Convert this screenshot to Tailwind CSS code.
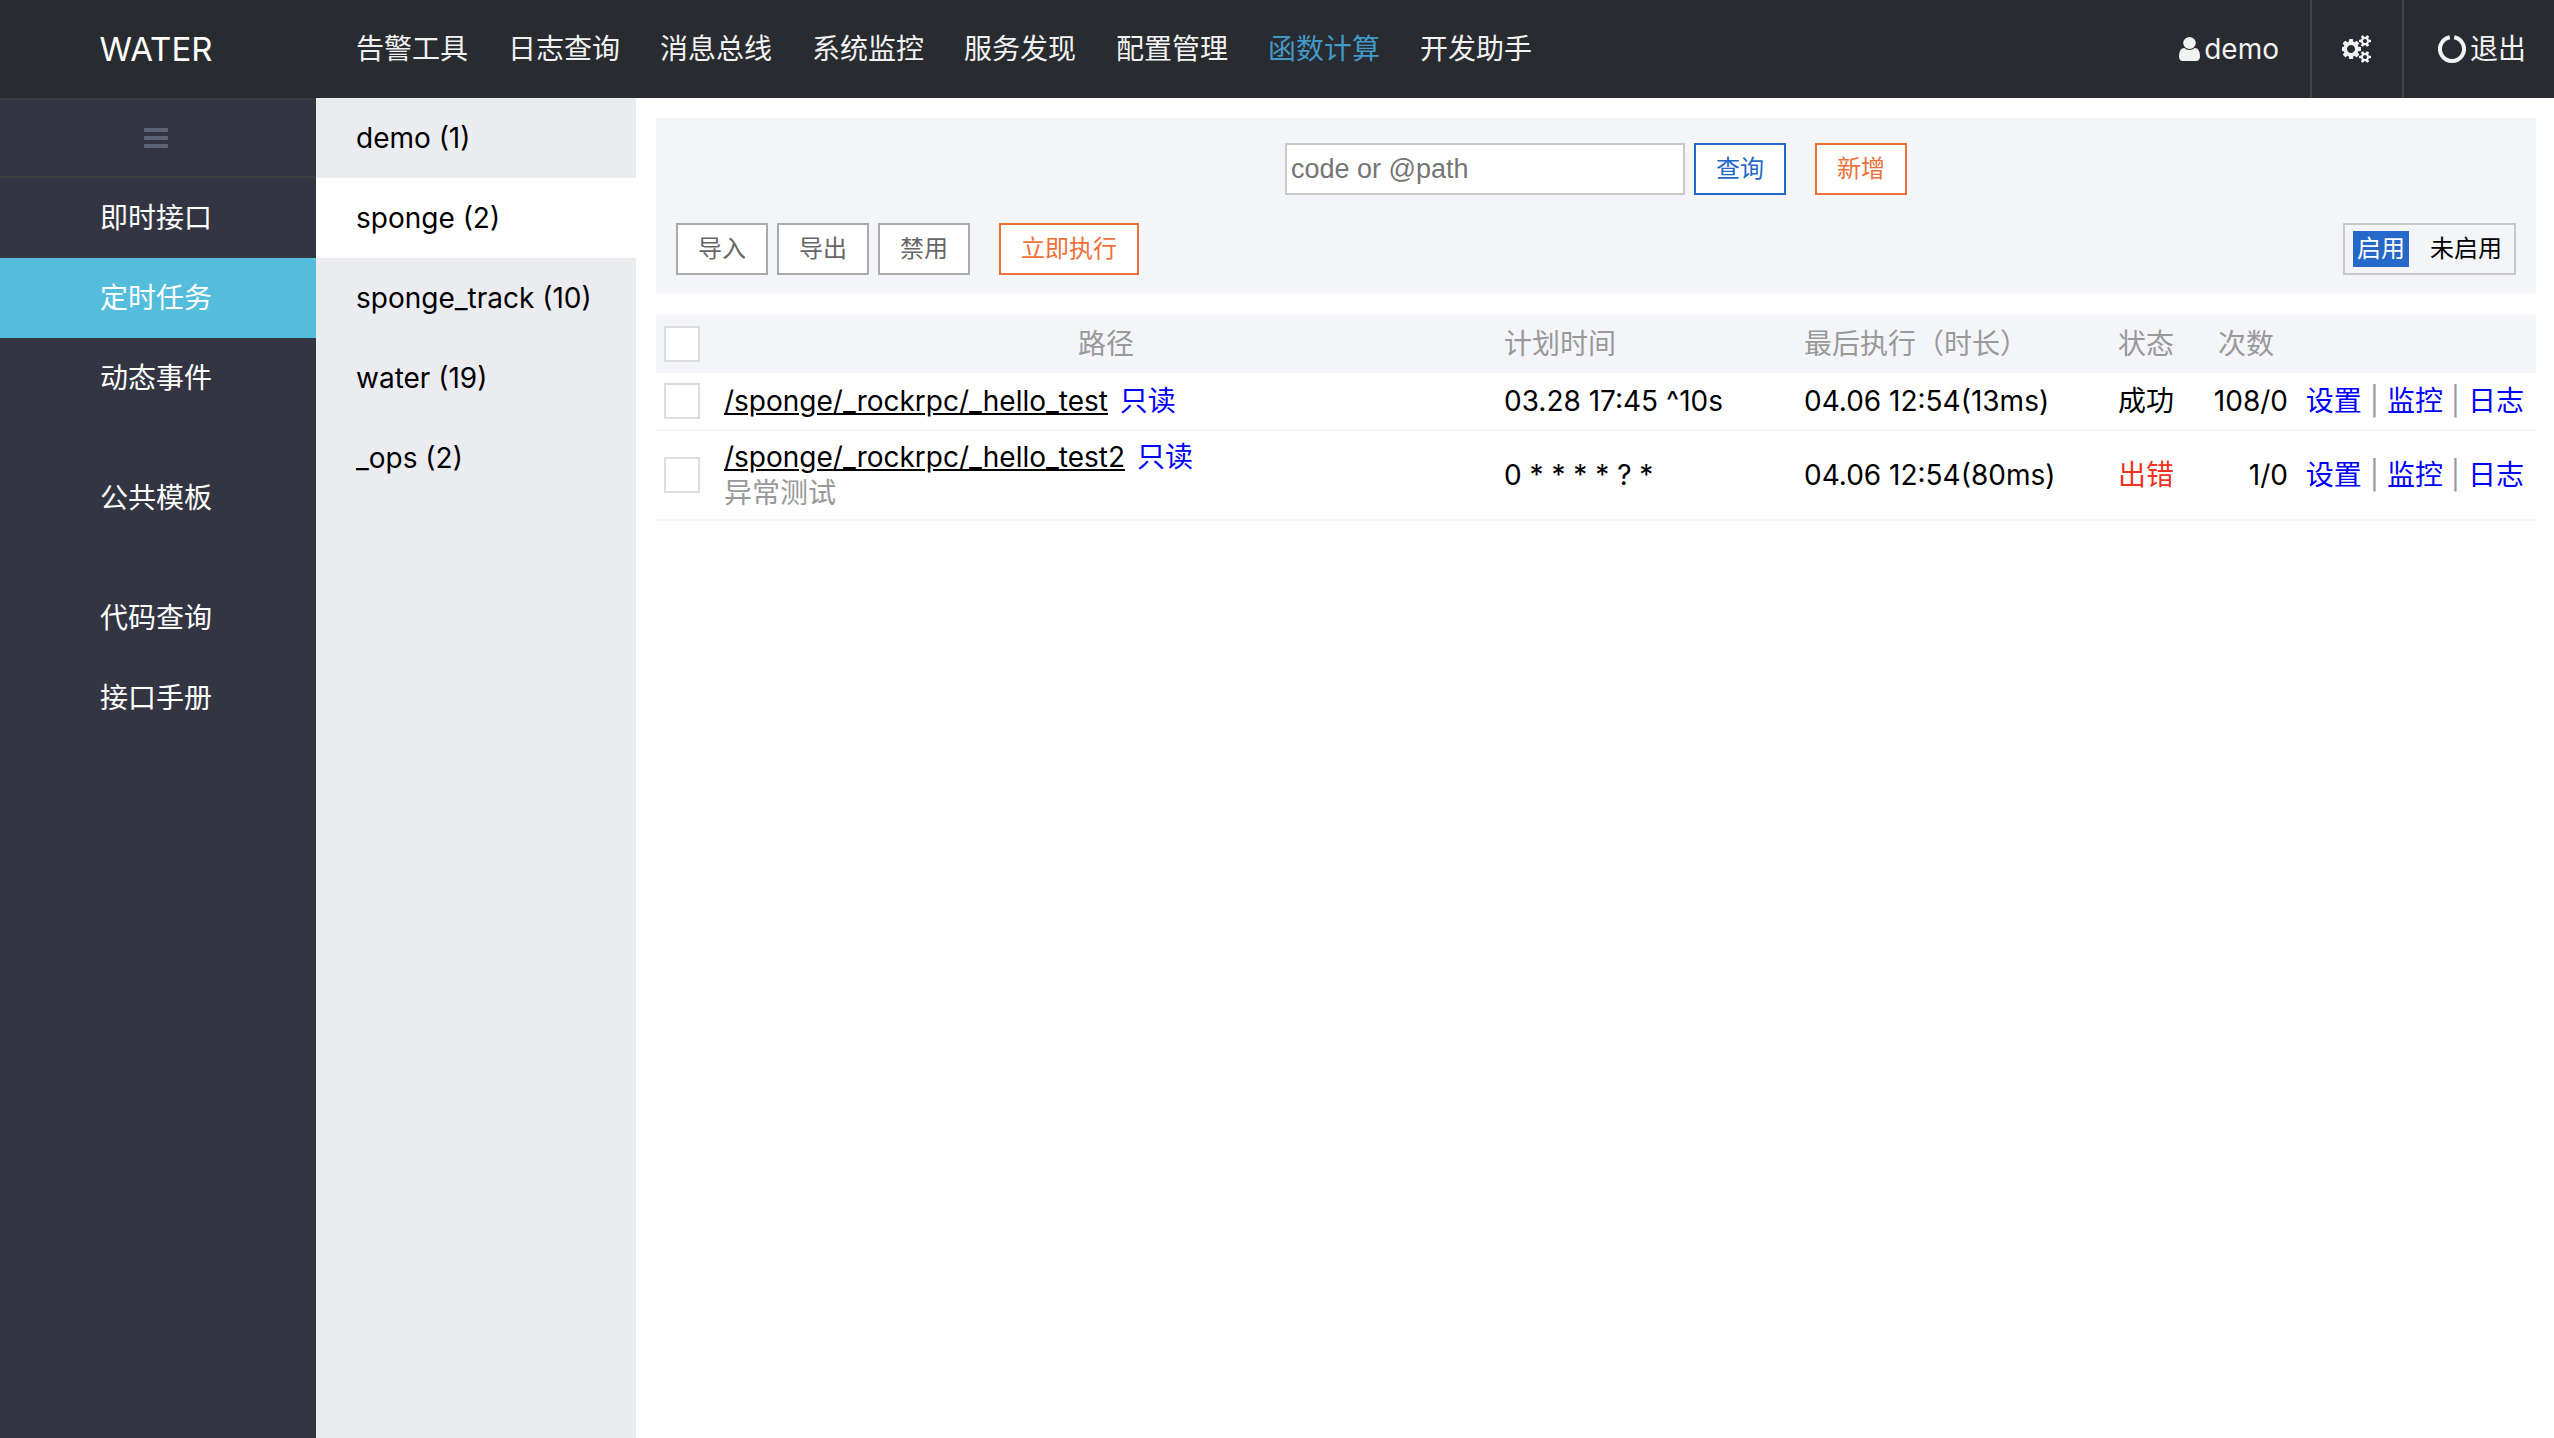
<!DOCTYPE html>
<html lang="zh-CN">
<head>
  <meta charset="UTF-8">
  <meta name="viewport" content="width=device-width, initial-scale=1.0">
  <title>WATER - 定时任务</title>
  <script src="https://cdn.jsdelivr.net/npm/@tailwindcss/browser@4"></script>
  <style>
    body, button {
      font-family: Inter, "Noto Sans CJK SC", sans-serif;
    }
    input {
      font-family: "Liberation Sans", "Noto Sans CJK SC", sans-serif;
    }
  </style>
</head>
<body class="flex min-h-screen flex-col bg-white text-[28px] leading-9 text-black">
  <header class="flex h-[98px] items-stretch bg-[#282b30] text-[#f2f2f2]">
    <a href="#" class="flex w-[316px] items-center justify-center pr-1 text-[33px] text-white">WATER</a>
    <nav class="flex items-center gap-10 pl-10">
      <a href="#">告警工具</a>
      <a href="#">日志查询</a>
      <a href="#">消息总线</a>
      <a href="#">系统监控</a>
      <a href="#">服务发现</a>
      <a href="#">配置管理</a>
      <a href="#" class="text-[#4398c6]">函数计算</a>
      <a href="#">开发助手</a>
    </nav>
    <div class="ml-auto flex items-stretch">
      <a href="#" class="flex items-center gap-1 pr-[31px]">
        <svg class="h-7 w-[21px]" viewBox="0 0 1280 1792" preserveAspectRatio="none" fill="currentColor" aria-hidden="true">
          <path d="M1280 1399q0 109-62.500 187t-150.500 78h-854q-88 0-150.500-78t-62.500-187q0-85 8.500-160.500t31.500-152 58.500-131 94-89 134.500-34.500q131 128 313 128t313-128q76 0 134.500 34.500t94 89 58.500 131 31.500 152 8.500 160.500zm-256-887q0 159-112.500 271.500t-271.500 112.500-271.500-112.500-112.500-271.500 112.500-271.500 271.500-112.500 271.500 112.500 112.500 271.500z"/>
        </svg>
        demo
      </a>
      <a href="#" aria-label="设置" class="flex w-[92px] items-center justify-center border-l-2 border-[#444]">
        <svg class="h-7 w-[30px]" viewBox="0 0 1920 1792" fill="currentColor" aria-hidden="true">
          <path d="M832 896q0-106-75-181t-181-75-181 75-75 181 75 181 181 75 181-75 75-181zm768 512q0-52-38-90t-90-38-90 38-38 90q0 53 37.500 90.500t90.500 37.500 90.500-37.500 37.500-90.500zm0-1024q0-52-38-90t-90-38-90 38-38 90q0 53 37.500 90.500t90.500 37.500 90.500-37.500 37.500-90.500zm-384 421v185q0 10-7 19.500t-16 10.500l-155 24q-11 35-32 76 34 48 90 115 7 11 7 20 0 12-7 19-23 30-82.500 89.500t-78.500 59.500q-11 0-21-7l-115-90q-37 19-77 31-11 108-23 155-7 24-30 24h-186q-11 0-20-7.500t-10-17.500l-23-153q-34-10-75-31l-118 89q-7 7-20 7-11 0-21-8-144-133-144-160 0-9 7-19 10-14 41-53t47-61q-23-44-35-82l-152-24q-10-1-17-9.500t-7-19.500v-185q0-10 7-19.500t16-10.500l155-24q11-35 32-76-34-48-90-115-7-11-7-20 0-12 7-20 22-30 82-89t79-59q11 0 21 7l115 90q34-18 77-32 11-108 23-154 7-24 30-24h186q11 0 20 7.500t10 17.500l23 153q34 10 75 31l118-89q8-7 20-7 11 0 21 8 144 133 144 160 0 8-7 19-12 16-42 54t-45 60q23 48 34 82l152 23q10 2 17 10.500t7 19.500zm640 533v140q0 16-149 31-12 27-30 52 51 113 51 138 0 4-4 7-122 71-124 71-8 0-46-47t-52-68q-20 2-30 2t-30-2q-14 21-52 68t-46 47q-2 0-124-71-4-3-4-7 0-25 51-138-18-25-30-52-149-15-149-31v-140q0-16 149-31 13-29 30-52-51-113-51-138 0-4 4-7 4-2 35-20t59-34 30-16q8 0 46 46.500t52 67.500q20-2 30-2t30 2q51-71 92-112l6-2q4 0 124 70 4 3 4 7 0 25-51 138 17 23 30 52 149 15 149 31zm0-1024v140q0 16-149 31-12 27-30 52 51 113 51 138 0 4-4 7-122 71-124 71-8 0-46-47t-52-68q-20 2-30 2t-30-2q-14 21-52 68t-46 47q-2 0-124-71-4-3-4-7 0-25 51-138-18-25-30-52-149-15-149-31v-140q0-16 149-31 13-29 30-52-51-113-51-138 0-4 4-7 4-2 35-20t59-34 30-16q8 0 46 46.500t52 67.500q20-2 30-2t30 2q51-71 92-112l6-2q4 0 124 70 4 3 4 7 0 25-51 138 17 23 30 52 149 15 149 31z"/>
        </svg>
      </a>
      <a href="#" class="flex items-center gap-1 border-l-2 border-[#444] pr-7 pl-[34px]">
        <svg class="size-7" viewBox="0 0 28 28" fill="none" stroke="currentColor" stroke-width="4" aria-hidden="true">
          <path d="M16.200 2.200A12 12 0 1 1 11.800 2.200"/>
        </svg>
        退出
      </a>
    </div>
  </header>

  <div class="flex flex-1 items-stretch">
    <aside class="w-[316px] shrink-0 bg-[#333542] text-white">
      <button type="button" aria-label="收起菜单" class="flex h-20 w-full items-center justify-center border-y-2 border-[#3c3d3f] pr-1">
        <svg class="h-5 w-6" viewBox="0 0 24 20" fill="#5c6276" aria-hidden="true">
          <rect width="24" height="4" rx="1"/>
          <rect y="8" width="24" height="4" rx="1"/>
          <rect y="16" width="24" height="4" rx="1"/>
        </svg>
      </button>
      <nav>
        <a href="#" class="flex h-20 items-center justify-center pr-1">即时接口</a>
        <a href="#" class="flex h-20 items-center justify-center bg-[#54bddb] pr-1">定时任务</a>
        <a href="#" class="flex h-20 items-center justify-center pr-1">动态事件</a>
        <a href="#" class="mt-10 flex h-20 items-center justify-center pr-1">公共模板</a>
        <a href="#" class="mt-10 flex h-20 items-center justify-center pr-1">代码查询</a>
        <a href="#" class="flex h-20 items-center justify-center pr-1">接口手册</a>
      </nav>
    </aside>

    <nav class="w-80 shrink-0 bg-[#ebecf0]">
      <a href="#" class="flex h-20 items-center pl-10">demo (1)</a>
      <a href="#" class="flex h-20 items-center bg-white pl-10">sponge (2)</a>
      <a href="#" class="flex h-20 items-center pl-10">sponge_track (10)</a>
      <a href="#" class="flex h-20 items-center pl-10">water (19)</a>
      <a href="#" class="flex h-20 items-center pl-10">_ops (2)</a>
    </nav>

    <main class="min-w-0 flex-1 py-5 pr-[18px] pl-5">
      <section class="bg-[#f4f5f9] px-5 pt-[25px] pb-[19px] text-2xl leading-8">
        <form class="flex justify-center">
          <input type="text" aria-label="code or @path" placeholder="code or @path" class="h-[52px] w-[400px] border-2 border-[#c8c8c8] bg-white px-1 text-[27px] placeholder:text-[#757575]">
          <button type="button" class="ml-[9px] h-[52px] border-2 border-[#2468c8] bg-white px-5 text-[#2468c8]">查询</button>
          <button type="button" class="ml-[29px] h-[52px] border-2 border-[#ed7038] bg-white px-5 text-[#ed7038]">新增</button>
        </form>
        <div class="mt-7 flex gap-[9px]">
          <button type="button" class="h-[52px] border-2 border-[#aaa] bg-white px-5 text-[#666]">导入</button>
          <button type="button" class="h-[52px] border-2 border-[#aaa] bg-white px-5 text-[#666]">导出</button>
          <button type="button" class="h-[52px] border-2 border-[#aaa] bg-white px-5 text-[#666]">禁用</button>
          <button type="button" class="ml-5 h-[52px] border-2 border-[#ed7038] bg-white px-5 text-[#ed7038]">立即执行</button>
          <div class="ml-auto flex h-[52px] items-center gap-[17px] border-2 border-[#c8c8c8] px-2">
            <a href="#" class="flex h-9 items-center bg-[#2468c8] px-1 text-white">启用</a>
            <a href="#" class="flex h-9 items-center px-1">未启用</a>
          </div>
        </div>
      </section>

      <table class="mt-5 w-full table-fixed border-collapse">
        <colgroup>
          <col class="w-[60px]">
          <col>
          <col class="w-[300px]">
          <col class="w-[300px]">
          <col class="w-[100px]">
          <col class="w-[100px]">
          <col class="w-60">
        </colgroup>
        <thead>
          <tr class="h-[59px] bg-[#f4f5f9] text-[#999]">
            <th class="px-2"><input type="checkbox" aria-label="全选" class="block size-9 appearance-none border-2 border-[#ddd] bg-white"></th>
            <th class="px-2 font-normal">路径</th>
            <th class="px-2 text-left font-normal">计划时间</th>
            <th class="px-2 text-left font-normal">最后执行（时长）</th>
            <th class="px-2 font-normal">状态</th>
            <th class="px-2 font-normal">次数</th>
            <th></th>
          </tr>
        </thead>
        <tbody>
          <tr class="h-[57px] border-b-2 border-[#f4f5f9]">
            <td class="px-2"><input type="checkbox" aria-label="/sponge/_rockrpc/_hello_test" class="block size-9 appearance-none border-2 border-[#ddd] bg-white"></td>
            <td class="px-2"><a href="#" class="underline">/sponge/_rockrpc/_hello_test</a> <a href="#" class="ml-1 text-[#0000ff]">只读</a></td>
            <td class="px-2">03.28 17:45 ^10s</td>
            <td class="px-2">04.06 12:54(13ms)</td>
            <td class="px-2 text-center">成功</td>
            <td class="px-2 text-right">108/0</td>
            <td class="pr-3 text-right whitespace-nowrap text-[#999]"><a href="#" class="text-[#0000ff]">设置</a> | <a href="#" class="text-[#0000ff]">监控</a> | <a href="#" class="text-[#0000ff]">日志</a></td>
          </tr>
          <tr class="h-[90px] border-b-2 border-[#f4f5f9]">
            <td class="px-2"><input type="checkbox" aria-label="/sponge/_rockrpc/_hello_test2" class="block size-9 appearance-none border-2 border-[#ddd] bg-white"></td>
            <td class="px-2">
              <a href="#" class="underline">/sponge/_rockrpc/_hello_test2</a> <a href="#" class="ml-1 text-[#0000ff]">只读</a>
              <p class="text-[#999]">异常测试</p>
            </td>
            <td class="px-2">0 * * * * ? *</td>
            <td class="px-2">04.06 12:54(80ms)</td>
            <td class="px-2 text-center text-[#f03020]">出错</td>
            <td class="px-2 text-right">1/0</td>
            <td class="pr-3 text-right whitespace-nowrap text-[#999]"><a href="#" class="text-[#0000ff]">设置</a> | <a href="#" class="text-[#0000ff]">监控</a> | <a href="#" class="text-[#0000ff]">日志</a></td>
          </tr>
        </tbody>
      </table>
    </main>
  </div>
</body>
</html>
